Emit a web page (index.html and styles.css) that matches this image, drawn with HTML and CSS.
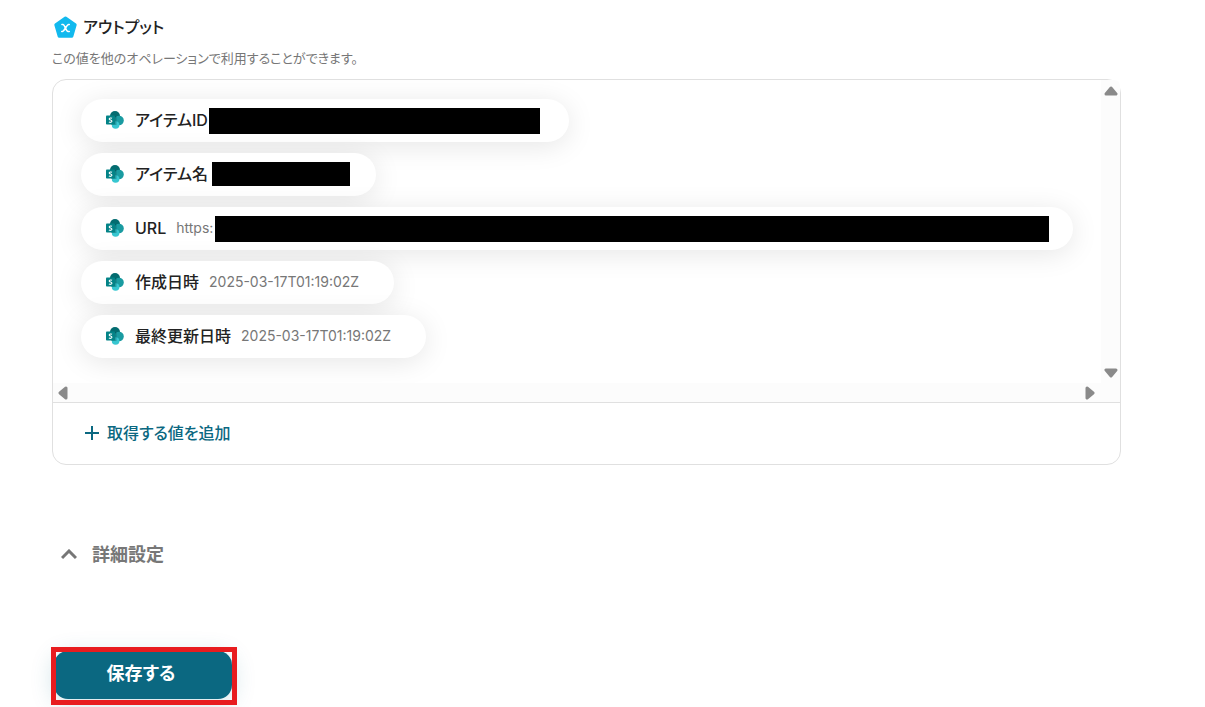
FILE: index.html
```html
<!DOCTYPE html>
<html lang="ja">
<head>
    <meta charset="UTF-8">
    <meta name="viewport" content="width=device-width, initial-scale=1.0">
    <title>アウトプット</title>
    <link rel="stylesheet" href="styles.css">
</head>
<body>

<!-- Shared SharePoint icon -->
<svg class="sprite" aria-hidden="true">
    <symbol id="sharepoint" viewBox="0 0 18 18">
        <circle cx="9" cy="5" r="5" fill="#036c70"/>
        <circle cx="13" cy="9.5" r="4.8" fill="#1a9ba1"/>
        <circle cx="9.6" cy="14" r="3.8" fill="#37c6d0"/>
        <path d="M5 5h4.5a1 1 0 0 1 1 1v8H5z" fill="#024d50" opacity="0.35"/>
        <rect x="0" y="4.6" width="9" height="9" rx="0.8" fill="#038387"/>
        <path d="M6 7.3C5.3 6.8 3.2 6.7 3.2 7.9c0 1.4 2.7 1 2.7 2.4 0 1.3-2.1 1.2-3 .6" fill="none" stroke="#fff" stroke-width="1.1"/>
    </symbol>
</svg>

<main class="container">
    <!-- Header -->
    <header class="output-header">
        <svg class="output-icon" viewBox="0 0 22 22" aria-hidden="true">
            <path d="M11 2 L20.2 8.4 L17 19.4 H5 L1.8 8.4 Z" fill="#12b9ee" stroke="#12b9ee" stroke-width="3" stroke-linejoin="round"/>
            <path d="M7.6 8.2H8.6C10.4 8.2 11.4 14.8 13.4 14.8H14.6M14.6 8.2H14C12 8.2 10 14.8 8 14.8H7.4" fill="none" stroke="#fff" stroke-width="1.5" stroke-linecap="round"/>
        </svg>
        <h1>アウトプット</h1>
    </header>
    <p class="description">この値を他のオペレーションで利用することができます。</p>

    <!-- Output values -->
    <section class="panel">
        <div class="scroll-area">
            <ul class="output-list">
                <li class="pill">
                    <svg class="pill-icon"><use href="#sharepoint"/></svg>
                    <span class="label">アイテムID</span>
                    <span class="value value-id"><span class="mask mask-id"></span></span>
                </li>
                <li class="pill">
                    <svg class="pill-icon"><use href="#sharepoint"/></svg>
                    <span class="label">アイテム名</span>
                    <span class="value value-name"><span class="mask mask-name"></span></span>
                </li>
                <li class="pill">
                    <svg class="pill-icon"><use href="#sharepoint"/></svg>
                    <span class="label">URL</span>
                    <span class="value value-url">https:<span class="mask mask-url"></span></span>
                </li>
                <li class="pill">
                    <svg class="pill-icon"><use href="#sharepoint"/></svg>
                    <span class="label">作成日時</span>
                    <span class="value">2025-03-17T01:19:02Z</span>
                </li>
                <li class="pill">
                    <svg class="pill-icon"><use href="#sharepoint"/></svg>
                    <span class="label">最終更新日時</span>
                    <span class="value">2025-03-17T01:19:02Z</span>
                </li>
            </ul>
            <div class="track track-y">
                <svg class="arrow" viewBox="0 0 14 12"><path d="M7 3 L12 9 H2 Z"/></svg>
                <svg class="arrow" viewBox="0 0 14 12"><path d="M2 3 H12 L7 9 Z"/></svg>
            </div>
            <div class="track track-x">
                <svg class="arrow-side" viewBox="0 0 12 14"><path d="M9 2 V12 L3 7 Z"/></svg>
                <svg class="arrow-side" viewBox="0 0 12 14"><path d="M3 2 L9 7 L3 12 Z"/></svg>
            </div>
        </div>
        <div class="panel-footer">
            <button type="button" class="add-button">
                <svg class="add-icon" viewBox="0 0 16 16"><path d="M8 1V15M1 8H15"/></svg>
                取得する値を追加
            </button>
        </div>
    </section>

    <!-- Advanced settings -->
    <button type="button" class="toggle-button">
        <svg class="chevron" viewBox="0 0 16 12"><path d="M1 9 L8 2 L15 9"/></svg>
        詳細設定
    </button>

    <!-- Submit -->
    <div class="submit">
        <button type="button" class="save-button">保存する</button>
        <span class="highlight"></span>
    </div>
</main>

</body>
</html>
```

FILE: styles.css
```css
/* Global styles */
* {
    box-sizing: border-box;
}

body {
    font-family: Inter, "Noto Sans CJK JP", sans-serif;
    font-feature-settings: "palt";
    font-size: 16px;
    line-height: 24px;
    color: #222;
    background-color: #fff;
    margin: 0;
}

button {
    font: inherit;
    font-feature-settings: inherit;
    border: none;
    background: none;
    padding: 0;
    cursor: pointer;
}

.sprite {
    position: absolute;
    width: 0;
    height: 0;
}

.container {
    padding: 15px 84px 8px 52px;
}

/* Header */
.output-header {
    display: flex;
    align-items: center;
    gap: 6px;
    padding-left: 2px;
}

.output-icon {
    width: 23px;
    height: 23px;
}

h1 {
    font-size: 16px;
    font-weight: 500;
    margin: 0;
}

.description {
    font-size: 13px;
    line-height: 20px;
    color: #777;
    margin: 9px 0 11px;
}

/* Output panel */
.panel {
    border: 1px solid #e0e0e0;
    border-radius: 14px;
}

.scroll-area {
    display: grid;
    grid-template-columns: minmax(0, 1fr) 19px;
    grid-template-rows: auto 19px;
    border-bottom: 1px solid #e0e0e0;
}

.output-list {
    display: flex;
    flex-direction: column;
    align-items: flex-start;
    gap: 11px;
    overflow: hidden;
    list-style: none;
    margin: 0;
    padding: 19px 28px 25px;
    border-top-left-radius: 13px;
}

.pill {
    display: flex;
    align-items: center;
    gap: 10px;
    height: 43px;
    padding: 0 35px 2px 25px;
    border-radius: 22px;
    background-color: #fff;
    box-shadow: 0 4px 28px rgba(0, 0, 0, 0.1);
    white-space: nowrap;
}

.pill-icon {
    width: 18px;
    height: 18px;
    margin-right: 1px;
}

.label {
    font-weight: 500;
}

.value {
    position: relative;
    font-size: 14px;
    color: #777;
}

.value-id {
    width: 316px;
    height: 24px;
}

.value-name {
    width: 123px;
    height: 24px;
}

.value-url {
    width: 862px;
}

/* Blacked-out values */
.mask {
    position: absolute;
    top: 0;
    bottom: -2px;
    background-color: #000;
}

.mask-id {
    left: -9px;
    right: -6px;
}

.mask-name {
    left: -6px;
    right: -9px;
    bottom: 0;
}

.mask-url {
    left: 39px;
    right: -11px;
}

/* Scroll tracks */
.track {
    display: flex;
    justify-content: space-between;
    align-items: center;
    background-color: #fcfcfc;
}

.track-y {
    flex-direction: column;
    padding: 5px 0 4px;
    border-top-right-radius: 6px;
}

.track-x {
    grid-column: 1 / -1;
    padding: 0 24px 0 4px;
}

.arrow {
    width: 14px;
    height: 12px;
}

.arrow-side {
    width: 12px;
    height: 14px;
}

.arrow path,
.arrow-side path {
    fill: #8a8a8a;
    stroke: #8a8a8a;
    stroke-width: 3;
    stroke-linejoin: round;
}

.panel-footer {
    padding: 18px 31px 19px;
}

.add-button {
    display: flex;
    align-items: center;
    gap: 7px;
    font-weight: 500;
    color: #0b6881;
}

.add-icon {
    width: 16px;
    height: 16px;
    fill: none;
    stroke: currentColor;
    stroke-width: 2;
}

/* Advanced settings */
.toggle-button {
    display: flex;
    align-items: center;
    gap: 15px;
    font-size: 18px;
    font-weight: 600;
    line-height: 28px;
    color: #777;
    margin: 76px 0 82px;
    padding-left: 9px;
}

.chevron {
    width: 16px;
    height: 12px;
    fill: none;
    stroke: #777;
    stroke-width: 3;
}

/* Submit */
.submit {
    position: relative;
    display: inline-block;
    padding-left: 2px;
}

.save-button {
    width: 178px;
    height: 48px;
    padding: 0 4px 2px 0;
    font-size: 18px;
    font-weight: 700;
    color: #fff;
    background-color: #0b6881;
    border-radius: 14px;
    box-shadow: 0 4px 24px rgba(11, 104, 129, 0.2);
}

.highlight {
    position: absolute;
    inset: -4px -5px -6px -1px;
    border: 5px solid #e81c1f;
    pointer-events: none;
}
```
